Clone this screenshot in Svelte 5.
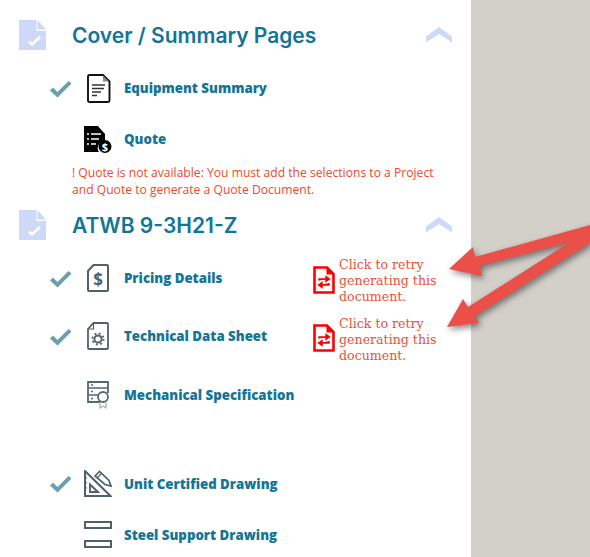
<script>
  const check = "M0 10.500 L3 7.500 L7.500 12 L18.500 1 L21.500 3.500 L7.500 17.500 Z";
</script>

{#snippet tick()}
  <svg class="tick" width="23" height="19" viewBox="0 0 23 19"><path d={check} /></svg>
{/snippet}

{#snippet sectionHead(title)}
  <header class="head">
    <svg class="page-icon" width="27" height="30" viewBox="0 0 27 30">
      <path class="soft" d="M0 0H17.500V11H27V30H0Z" />
      <path class="soft" d="M18.500 0L27 9.500H18.500Z" />
      <path d="M10 21.500L13 24.500L21 17" fill="none" stroke="#fff" stroke-width="2.600" />
    </svg>
    <h2>{title}</h2>
    <svg class="chevron" width="26" height="16" viewBox="0 0 26 16"><path class="soft" d="M0 9.500L13 0L26 9.500V15.500L13 7L0 15.500Z" /></svg>
  </header>
{/snippet}

{#snippet retry()}
  <button class="retry">
    <svg width="22" height="28" viewBox="0 0 22 28">
      <path d="M1.500 1.500H14L20.500 8V26.500H1.500Z" fill="#fff" stroke="#fe0000" stroke-width="2.600" />
      <path d="M13.500 1.500V8.500H20.500" fill="#fe0000" />
      <path d="M6 14.500V13H15M13 10.500L16.500 13L13 15.500Z M16 17V19H7M9 16.500L5.500 19L9 21.500Z" fill="#fe0000" stroke="#fe0000" stroke-width="1.400" />
    </svg>
    <span>Click to retry generating this document.</span>
  </button>
{/snippet}

<div class="page">
  <main class="panel">
    <section>
      {@render sectionHead("Cover / Summary Pages")}
      <div class="row first">
        <span class="mark">{@render tick()}</span>
        <span class="box">
          <svg class="narrow" width="24" height="29" viewBox="0 0 24 29">
            <path d="M2.500 1H16L22.500 7.500V26.500Q22.500 28 21 28H2.500Q1 28 1 26.500V2.500Q1 1 2.500 1Z" fill="none" stroke="#111" stroke-width="1.900" />
            <path d="M16 1.500L22 7.500H16Z" fill="#888" />
            <path d="M5 11H18M5 14.500H17M5 18H14M5 21.500H10" stroke="#333" stroke-width="1.300" />
          </svg>
        </span>
        <a href="#equipment">Equipment Summary</a>
      </div>
      <div class="row quote low">
        <span class="mark"></span>
        <span class="box">
          <svg width="28" height="28" viewBox="0 0 28 28">
            <path d="M0 1H14L21 9V16A7 7 0 0 0 15 27H0Z" fill="#000" />
            <path d="M15 1L21 7" stroke="#fff" stroke-width="1.500" />
            <path d="M3 9H5M7 9H17M3 14H5M7 14H15M3 19H5M7 19H12" stroke="#fff" stroke-width="1.600" />
            <circle cx="21" cy="21.500" r="6.500" fill="#000" />
            <text x="21" y="25.500" text-anchor="middle" class="dollar">$</text>
          </svg>
        </span>
        <a href="#quote">Quote</a>
      </div>
      <p class="error">! Quote is not available: You must add the selections to a Project and Quote to generate a Quote Document.</p>
    </section>

    <section class="second">
      {@render sectionHead("ATWB 9-3H21-Z")}
      <div class="row tall">
        <span class="mark">{@render tick()}</span>
        <span class="box">
          <svg class="narrow" width="22" height="28" viewBox="0 0 22 28">
            <path d="M6.500 1H20A1 1 0 0 1 21 2V26A1 1 0 0 1 20 27H2A1 1 0 0 1 1 26V7Z" fill="none" stroke="#4f626b" stroke-width="2" />
            <text x="11" y="21.500" text-anchor="middle" class="doc-dollar">$</text>
          </svg>
        </span>
        <a href="#pricing">Pricing Details</a>
        {@render retry()}
      </div>
      <div class="row tall">
        <span class="mark">{@render tick()}</span>
        <span class="box">
          <svg class="narrow" width="22" height="28" viewBox="0 0 22 28">
            <path d="M6.500 1H20A1 1 0 0 1 21 2V26A1 1 0 0 1 20 27H2A1 1 0 0 1 1 26V7Z" fill="none" stroke="#4f626b" stroke-width="1.800" />
            <path d="M6.500 1.500V7H1.500" fill="none" stroke="#4f626b" stroke-width="1.200" />
            <circle cx="11" cy="17" r="3.600" fill="none" stroke="#4f626b" stroke-width="2" />
            <circle cx="11" cy="17" r="5.600" fill="none" stroke="#4f626b" stroke-width="1.800" stroke-dasharray="2 2.400" />
          </svg>
        </span>
        <a href="#tech">Technical Data Sheet</a>
        {@render retry()}
      </div>
      <div class="row mech">
        <span class="mark"></span>
        <span class="box">
          <svg class="narrow" width="23" height="28" viewBox="0 0 23 28">
            <path d="M13 21H1V1H21V12" fill="none" stroke="#566870" stroke-width="1.800" />
            <path d="M1 7H21M1 14H11" stroke="#566870" stroke-width="1.700" />
            <path d="M4 4H6M4 10.500H6M4 17.500H6" stroke="#566870" stroke-width="1.300" />
            <circle cx="16" cy="16" r="5" fill="#fff" stroke="#566870" stroke-width="1.800" />
            <path d="M13 21.500V27L16 25L19 27V21.500" fill="none" stroke="#a9b3b7" stroke-width="1.300" />
          </svg>
        </span>
        <a href="#mech">Mechanical Specification</a>
      </div>
      <div class="row drawing low">
        <span class="mark">{@render tick()}</span>
        <span class="box">
          <svg width="28" height="27" viewBox="0 0 28 27">
            <path d="M1 1L26.500 26H1Z" fill="none" stroke="#4f626b" stroke-width="2" />
            <path d="M6 14.500L14 22H6Z" fill="none" stroke="#4f626b" stroke-width="1.900" />
            <path d="M1 8H3M1 13H3M1 18H3" stroke="#4f626b" stroke-width="1.200" />
            <path d="M11 6L15.500 1.500L25 10.500L27 16L21 14.500Z" fill="#fff" stroke="#4f626b" stroke-width="1.700" />
            <path d="M13 8L17.500 3.500" stroke="#4f626b" stroke-width="1.200" />
          </svg>
        </span>
        <a href="#cert">Unit Certified Drawing</a>
      </div>
      <div class="row low">
        <span class="mark"></span>
        <span class="box">
          <svg width="28" height="27" viewBox="0 0 28 27">
            <rect x="1" y="1" width="26" height="6" fill="none" stroke="#4f626b" stroke-width="2" />
            <rect x="1" y="20" width="26" height="6" fill="none" stroke="#4f626b" stroke-width="2" />
          </svg>
        </span>
        <a href="#steel">Steel Support Drawing</a>
      </div>
    </section>
  </main>
  <aside class="side"></aside>
  <svg class="arrows" width="590" height="557" viewBox="0 0 590 557" aria-hidden="true">
    <polygon points="449,269 473,247 475,257 590,225 590,243 475,316 479,323 447,327 463,299 468,307 570,242 480,266 482,276" />
  </svg>
</div>

<style>
  :global(body) { margin: 0; }
  .page {
    position: relative;
    display: flex;
    width: 590px;
    height: 557px;
    overflow: hidden;
    font-family: "Open Sans", sans-serif;
  }
  .panel { width: 471px; padding-top: 20px; box-sizing: border-box; background: #fff; }
  .side { flex: 1; background: #d3cfc9; }
  .arrows { position: absolute; inset: 0; filter: drop-shadow(2px 3px 3px rgba(0,0,0,.45)); pointer-events: none; }
  polygon { fill: #ea4f48; }
  .soft { fill: #ccdaf7; }

  .head { display: flex; align-items: center; height: 30px; padding: 0 19px; }
  .page-icon { flex: none; }
  h2 {
    flex: 1;
    margin: 2px 0 0 26px;
    font-family: Inter, sans-serif;
    font-size: 21px;
    font-weight: 600;
    line-height: 28px;
    color: #137595;
  }
  .chevron { margin-top: 0; }

  .second { margin-top: 12px; }

  .row { display: flex; align-items: center; height: 51px; padding-left: 50px; }
  .first { margin-top: 13px; }
  .quote { height: 49px; }
  .tall { height: 58px; }
  .mech { height: 60px; margin-bottom: 33px; }
  .second .head { margin-bottom: 9px; }
  .mark { flex: none; width: 34px; display: flex; padding-top: 2px; }
  .box { flex: none; display: flex; align-items: center; width: 40px; }
  .narrow { margin-left: 3px; }
  .tick path { fill: #6a9fae; }
  a {
    margin-top: -1px;
    font-size: 13.25px;
    font-weight: 800;
    color: #137595;
    text-decoration: none;
    white-space: nowrap;
  }
  .low a { margin-top: 1px; }
  .dollar { font: 700 11px "Open Sans", sans-serif; fill: #fff; }
  .doc-dollar { font: 700 17px "Open Sans", sans-serif; fill: #4f626b; }

  .error {
    margin: 1px 0 0;
    padding: 0 30px 0 72px;
    font-size: 12.13px;
    line-height: 17px;
    color: #f0492e;
  }

  .retry {
    position: absolute;
    left: 313px;
    display: flex;
    align-items: center;
    gap: 4px;
    width: 135px;
    padding: 0;
    border: 0;
    background: none;
    text-align: left;
    font: 12.6px/16px "DejaVu Serif", serif;
    color: #e8533a;
  }
  .retry span { margin-top: 6px; }
  .tall + .tall .retry span { margin-top: 8px; }
  .retry svg { flex: none; margin-top: 4px; }
</style>
